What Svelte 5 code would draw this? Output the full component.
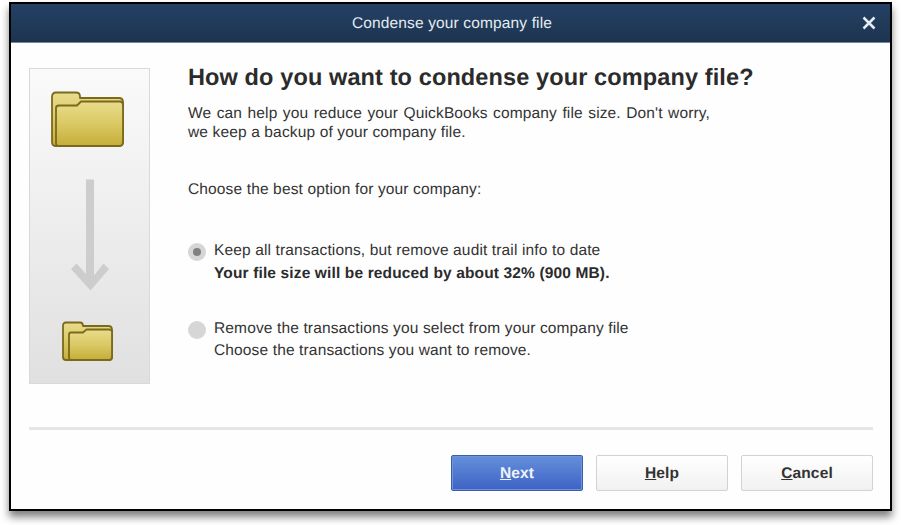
<script>
  let selected = $state("audit");

  const options = [
    {
      id: "audit",
      title: "Keep all transactions, but remove audit trail info to date",
      note: "Your file size will be reduced by about 32% (900 MB).",
      strong: true
    },
    {
      id: "remove",
      title: "Remove the transactions you select from your company file",
      note: "Choose the transactions you want to remove.",
      strong: false
    }
  ];

  const buttons = ["Next", "Help", "Cancel"];
</script>

<!-- Folder icon, drawn at both sizes -->
{#snippet folder(width, height, back, front, box)}
  <svg class="folder" {width} {height} viewBox={box}>
    <defs>
      <linearGradient id="gold{width}" x1="0" y1="0" x2="0" y2="1">
        <stop offset="0" stop-color="#e9dc8c" />
        <stop offset="0.45" stop-color="#dccb69" />
        <stop offset="1" stop-color="#c5ad38" />
      </linearGradient>
    </defs>
    <path d={back} fill="url(#gold{width})" />
    <path d={front} fill="url(#gold{width})" />
  </svg>
{/snippet}

<div class="dialog">
  <header class="titlebar">
    <span class="title">Condense your company file</span>
    <button class="close" aria-label="Close">
      <svg width="14" height="14" viewBox="0 0 14 14">
        <path d="M1.500 1.500L12.500 12.500M12.500 1.500L1.500 12.500" />
      </svg>
    </button>
  </header>

  <div class="body">
    <div class="picture">
      {@render folder(
        73,
        56,
        "M5 55Q1 55 1 51V6Q1 1.500 5 1.500H25Q29 1.500 29 5.500V7H68Q72 7 72 11V51Q72 55 68 55Z",
        "M7 55Q5 55 5 52V17Q5 14.500 8 14.500H26L30 10.500H69Q72 10.500 72 14V51Q72 55 68 55Z",
        "0 0 73 56"
      )}
      <svg class="arrow" width="40" height="113" viewBox="0 0 40 113">
        <path d="M16 0.500H24V96.500L33.500 84.500L39 90L20.500 111.500L1 90L6.500 84.500L16 95Z" />
      </svg>
      {@render folder(
        51,
        40,
        "M4 39Q1 39 1 36V5Q1 1.500 4 1.500H18Q21 1.500 21 5H46.500Q50 5 50 9V36Q50 39 47 39Z",
        "M9 39Q7 39 7 36V13.500Q7 11.500 9 11.500H21L24.500 8.500H47.500Q50 8.500 50 11V36Q50 39 47 39Z",
        "0 0 51 40"
      )}
    </div>

    <div class="content">
      <h1>How do you want to condense your company file?</h1>
      <p class="intro">
        <span class="first">We can help you reduce your QuickBooks company file size. Don't worry,</span>
        <span>we keep a backup of your company file.</span>
      </p>
      <p class="prompt">Choose the best option for your company:</p>

      {#each options as option}
        <label class="option">
          <input type="radio" name="mode" value={option.id} bind:group={selected} />
          <span class="radio"></span>
          <span class="text">
            <span class="name">{option.title}</span>
            <span class="note" class:strong={option.strong}>{option.note}</span>
          </span>
        </label>
      {/each}
    </div>
  </div>

  <footer>
    {#each buttons as label, i}
      <button class="btn" class:primary={i === 0}><span class="key">{label[0]}</span>{label.slice(1)}</button>
    {/each}
  </footer>
</div>

<style>
  :global(body) {
    background: #fff;
  }

  .dialog {
    box-sizing: border-box;
    display: flex;
    flex-direction: column;
    width: 883px;
    height: 509px;
    margin: 2px 0 0 9px;
    border: 2px solid #000;
    background: #fefefe;
    box-shadow: 0 6px 8px rgba(0, 0, 0, 0.5);
    font-family: "Liberation Sans", Arial, sans-serif;
    font-size: 15.5px;
    color: #333;
    text-rendering: geometricPrecision;
  }
  :global(#app) {
    display: flow-root;
    height: 525px;
    overflow: hidden;
  }

  /* Title bar */
  .titlebar {
    box-sizing: border-box;
    display: grid;
    grid-template-columns: 43px 1fr 40px;
    align-items: center;
    height: 39px;
    background: linear-gradient(#244164, #1d344f);
    border-bottom: 1px solid #77869a;
  }
  .title {
    grid-column: 2;
    padding-top: 2px;
    text-align: center;
    color: #e4ebf2;
    letter-spacing: 0.14px;
  }
  .close {
    display: flex;
    justify-content: center;
    padding: 0 2px 0 0;
    border: none;
    background: none;
  }
  .close path {
    stroke: #e6edf2;
    stroke-width: 2.5;
  }

  /* Body */
  .body {
    display: flex;
    height: 384px;
    margin: 0 17px 0 18px;
    border-bottom: 3px solid #e6e6e6;
  }
  .picture {
    box-sizing: border-box;
    display: flex;
    flex-direction: column;
    align-items: center;
    width: 121px;
    height: 316px;
    margin-top: 25px;
    padding: 22px 4px 0 0;
    border: 1px solid #d9d9d9;
    background: linear-gradient(#fafafa, #e0e0e0);
  }
  .folder path {
    stroke: #7b6a1c;
    stroke-width: 1.8;
    stroke-linejoin: round;
  }
  .arrow {
    margin: 32px 0 29px 5px;
    fill: #cdcdcd;
  }

  .content {
    margin-left: 38px;
    white-space: nowrap;
  }
  h1 {
    margin: 20px 0 0;
    font-size: 23.5px;
    line-height: 28px;
    letter-spacing: 0.12px;
    color: #2b2b2b;
  }
  p {
    margin: 0;
    line-height: 19px;
    letter-spacing: 0.14px;
  }
  .intro {
    margin-top: 13px;
  }
  .intro span {
    display: block;
  }
  .intro .first {
    word-spacing: 1px;
  }
  .prompt {
    margin-top: 38px;
  }

  .option {
    display: flex;
    margin-top: 41px;
  }
  .option + .option {
    margin-top: 33px;
  }
  .option input {
    position: absolute;
    opacity: 0;
  }
  .radio {
    display: flex;
    align-items: center;
    justify-content: center;
    width: 18px;
    height: 18px;
    margin: 3px 8px 0 0;
    border-radius: 50%;
    background: #d6d6d6;
  }
  input:checked + .radio::after {
    content: "";
    width: 8px;
    height: 8px;
    border-radius: 50%;
    background: #808080;
  }
  .text span {
    display: block;
    line-height: 22px;
    letter-spacing: 0.14px;
  }
  .text .strong {
    margin-top: 1px;
    font-weight: bold;
    color: #2b2b2b;
  }

  /* Buttons */
  footer {
    display: flex;
    justify-content: flex-end;
    gap: 13px;
    margin: 25px 17px 0 0;
  }
  .btn {
    width: 132px;
    height: 36px;
    padding: 2px 0 0;
    border: 1px solid #d2d2d2;
    border-radius: 2px;
    background: linear-gradient(#fff, #f1f1f1);
    font: bold 15.5px "Liberation Sans", Arial, sans-serif;
    letter-spacing: 0.14px;
    color: #333;
    text-rendering: geometricPrecision;
  }
  .btn.primary {
    border-color: #3c5ea8;
    background: linear-gradient(#6590dc, #3d62c4);
    box-shadow: inset 0 0 0 1px #6f94dc;
    color: #eef3fb;
  }
  .key {
    text-decoration: underline;
    text-underline-offset: 1px;
  }
</style>
